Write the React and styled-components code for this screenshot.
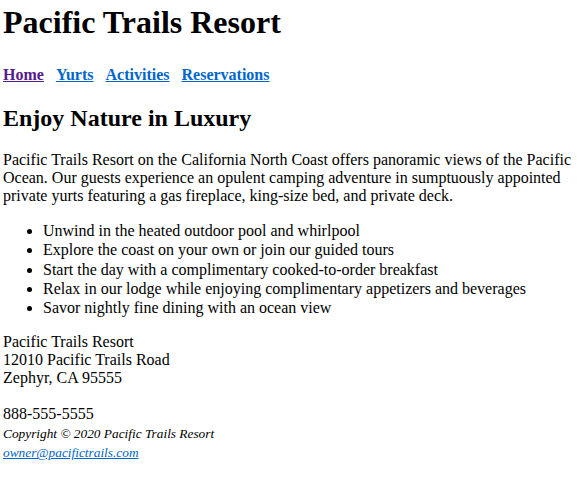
import styled, { createGlobalStyle } from "styled-components";

const GlobalStyle = createGlobalStyle`
  body {
    margin: 0 3px;
    font-family: "Liberation Serif", "Times New Roman", serif;
    font-size: 16px;
    line-height: 18px;
    color: #000;
    background: #fff;
  }
`;

export default function App() {
  return (
    <Wrapper>
      <GlobalStyle />
      <Header>
        <Title>Pacific Trails Resort</Title>
      </Header>
      <Nav>
        <NavLink href="#" $visited>
          Home
        </NavLink>
        <NavLink href="#">Yurts</NavLink>
        <NavLink href="#">Activities</NavLink>
        <NavLink href="#">Reservations</NavLink>
      </Nav>
      <main>
        <Heading>Enjoy Nature in Luxury</Heading>
        <Para>
          Pacific Trails Resort on the California North Coast offers panoramic
          views of the Pacific Ocean. Our guests experience an opulent camping
          adventure in sumptuously appointed private yurts featuring a gas
          fireplace, king-size bed, and private deck.
        </Para>
        <List>
          <Item>Unwind in the heated outdoor pool and whirlpool</Item>
          <Item>Explore the coast on your own or join our guided tours</Item>
          <Item>Start the day with a complimentary cooked-to-order breakfast</Item>
          <Item>
            Relax in our lodge while enjoying complimentary appetizers and
            beverages
          </Item>
          <Item>Savor nightly fine dining with an ocean view</Item>
        </List>
        <Contact>
          Pacific Trails Resort
          <br />
          12010 Pacific Trails Road
          <br />
          Zephyr, CA 95555
          <br />
          <br />
          888-555-5555
        </Contact>
      </main>
      <Footer>
        <small>
          <i>Copyright &copy; 2020 Pacific Trails Resort</i>
          <br />
          <i>
            <MailLink href="#">owner@pacifictrails.com</MailLink>
          </i>
        </small>
      </Footer>
    </Wrapper>
  );
}

const Wrapper = styled.div`
  padding-bottom: 20px;
`;

const Header = styled.header``;

const Title = styled.h1`
  font-size: 32px;
  line-height: normal;
  font-weight: bold;
  margin: 4px 0 0;
`;

const Nav = styled.nav`
  display: flex;
  gap: 12px;
  font-weight: bold;
  margin-top: 25px;
`;

const NavLink = styled.a`
  color: ${(p) => (p.$visited ? "#551a8b" : "#0066cc")};
  text-decoration: underline;
`;

const Heading = styled.h2`
  font-size: 24px;
  line-height: normal;
  margin: 21px 0 0;
`;

const Para = styled.p`
  margin: 19px 0 16px;
`;

const List = styled.ul`
  margin: 16px 0;
  padding-left: 40px;
`;

const Item = styled.li`
  line-height: 19.25px;
`;

const Contact = styled.div``;

const Footer = styled.footer`
  margin-top: 1px;
`;

const MailLink = styled.a`
  color: #0066cc;
`;
